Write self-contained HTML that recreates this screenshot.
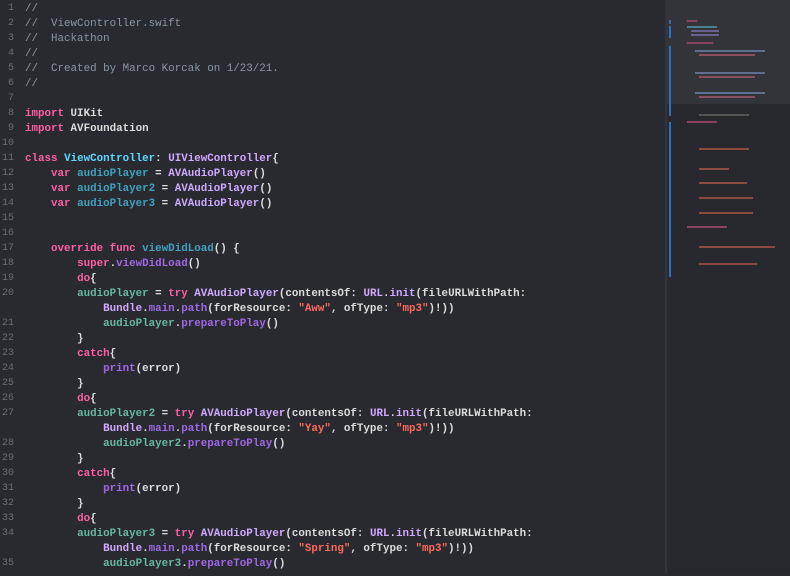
<!DOCTYPE html>
<html><head><meta charset="utf-8"><style>
body{margin:0;width:790px;height:573px;background:#292a2f;overflow:hidden;position:relative;font-family:"Liberation Mono",monospace;font-size:10.85px;}
.ln{position:absolute;left:0;width:14px;text-align:right;color:#6c6d72;font-size:10px;}
.c{position:absolute;left:25px;white-space:pre;color:#dcdcde;font-weight:bold;}
.cm{color:#8a96a2;font-weight:normal}
.k{color:#fc5fa3}
.t{color:#5dd8ff}
.d{color:#41a1c0;}
.p{color:#d0a8ff}
.v{color:#67b7a4}
.f{color:#a167e6}
.s{color:#fc6a5d}
#wrap{position:absolute;left:0;top:3px;width:665px;height:573px;}
#mm{position:absolute;left:665px;top:0;width:125px;height:573px;background:#28292e;border-left:2px solid #333439;}
#vp{position:absolute;left:0;top:0;width:123px;height:104px;background:#333439;}
.b{position:absolute;height:2px;}
.ch{position:absolute;left:2px;width:2px;background:#2f6fc0;}
</style></head><body>
<div id="wrap">
<div class="ln" style="top:0">1</div><div class="c" style="top:0"><span class="cm">//</span></div>
<div class="ln" style="top:15px">2</div><div class="c" style="top:15px"><span class="cm">//  ViewController.swift</span></div>
<div class="ln" style="top:30px">3</div><div class="c" style="top:30px"><span class="cm">//  Hackathon</span></div>
<div class="ln" style="top:45px">4</div><div class="c" style="top:45px"><span class="cm">//</span></div>
<div class="ln" style="top:60px">5</div><div class="c" style="top:60px"><span class="cm">//  Created by Marco Korcak on 1/23/21.</span></div>
<div class="ln" style="top:75px">6</div><div class="c" style="top:75px"><span class="cm">//</span></div>
<div class="ln" style="top:90px">7</div>
<div class="ln" style="top:105px">8</div><div class="c" style="top:105px"><span class="k">import</span> UIKit</div>
<div class="ln" style="top:120px">9</div><div class="c" style="top:120px"><span class="k">import</span> AVFoundation</div>
<div class="ln" style="top:135px">10</div>
<div class="ln" style="top:150px">11</div><div class="c" style="top:150px"><span class="k">class</span> <span class="t">ViewController</span>: <span class="p">UIViewController</span>{</div>
<div class="ln" style="top:165px">12</div><div class="c" style="top:165px">    <span class="k">var</span> <span class="d">audioPlayer</span> = <span class="p">AVAudioPlayer</span>()</div>
<div class="ln" style="top:180px">13</div><div class="c" style="top:180px">    <span class="k">var</span> <span class="d">audioPlayer2</span> = <span class="p">AVAudioPlayer</span>()</div>
<div class="ln" style="top:195px">14</div><div class="c" style="top:195px">    <span class="k">var</span> <span class="d">audioPlayer3</span> = <span class="p">AVAudioPlayer</span>()</div>
<div class="ln" style="top:210px">15</div>
<div class="ln" style="top:225px">16</div>
<div class="ln" style="top:240px">17</div><div class="c" style="top:240px">    <span class="k">override func</span> <span class="d">viewDidLoad</span>() {</div>
<div class="ln" style="top:255px">18</div><div class="c" style="top:255px">        <span class="k">super</span>.<span class="f">viewDidLoad</span>()</div>
<div class="ln" style="top:270px">19</div><div class="c" style="top:270px">        <span class="k">do</span>{</div>
<div class="ln" style="top:285px">20</div><div class="c" style="top:285px">        <span class="v">audioPlayer</span> = <span class="k">try</span> <span class="p">AVAudioPlayer</span>(contentsOf: <span class="p">URL</span>.<span class="p">init</span>(fileURLWithPath:</div>
<div class="c" style="top:300px">            <span class="p">Bundle</span>.<span class="f">main</span>.<span class="f">path</span>(forResource: <span class="s">"Aww"</span>, ofType: <span class="s">"mp3"</span>)!))</div>
<div class="ln" style="top:315px">21</div><div class="c" style="top:315px">            <span class="v">audioPlayer</span>.<span class="f">prepareToPlay</span>()</div>
<div class="ln" style="top:330px">22</div><div class="c" style="top:330px">        }</div>
<div class="ln" style="top:345px">23</div><div class="c" style="top:345px">        <span class="k">catch</span>{</div>
<div class="ln" style="top:360px">24</div><div class="c" style="top:360px">            <span class="f">print</span>(error)</div>
<div class="ln" style="top:375px">25</div><div class="c" style="top:375px">        }</div>
<div class="ln" style="top:390px">26</div><div class="c" style="top:390px">        <span class="k">do</span>{</div>
<div class="ln" style="top:405px">27</div><div class="c" style="top:405px">        <span class="v">audioPlayer2</span> = <span class="k">try</span> <span class="p">AVAudioPlayer</span>(contentsOf: <span class="p">URL</span>.<span class="p">init</span>(fileURLWithPath:</div>
<div class="c" style="top:420px">            <span class="p">Bundle</span>.<span class="f">main</span>.<span class="f">path</span>(forResource: <span class="s">"Yay"</span>, ofType: <span class="s">"mp3"</span>)!))</div>
<div class="ln" style="top:435px">28</div><div class="c" style="top:435px">            <span class="v">audioPlayer2</span>.<span class="f">prepareToPlay</span>()</div>
<div class="ln" style="top:450px">29</div><div class="c" style="top:450px">        }</div>
<div class="ln" style="top:465px">30</div><div class="c" style="top:465px">        <span class="k">catch</span>{</div>
<div class="ln" style="top:480px">31</div><div class="c" style="top:480px">            <span class="f">print</span>(error)</div>
<div class="ln" style="top:495px">32</div><div class="c" style="top:495px">        }</div>
<div class="ln" style="top:510px">33</div><div class="c" style="top:510px">        <span class="k">do</span>{</div>
<div class="ln" style="top:525px">34</div><div class="c" style="top:525px">        <span class="v">audioPlayer3</span> = <span class="k">try</span> <span class="p">AVAudioPlayer</span>(contentsOf: <span class="p">URL</span>.<span class="p">init</span>(fileURLWithPath:</div>
<div class="c" style="top:540px">            <span class="p">Bundle</span>.<span class="f">main</span>.<span class="f">path</span>(forResource: <span class="s">"Spring"</span>, ofType: <span class="s">"mp3"</span>)!))</div>
<div class="ln" style="top:555px">35</div><div class="c" style="top:555px">            <span class="v">audioPlayer3</span>.<span class="f">prepareToPlay</span>()</div>
</div>
<div id="mm"><div id="vp"></div>
<div class="ch" style="top:20px;height:4px"></div>
<div class="ch" style="top:26px;height:12px"></div>
<div class="ch" style="top:46px;height:70px"></div>
<div class="ch" style="top:122px;height:155px"></div>
<div class="b" style="left:20px;top:20px;width:10px;background:#8a4060"></div>
<div class="b" style="left:20px;top:26px;width:30px;background:#4a7f8f"></div>
<div class="b" style="left:24px;top:30px;width:28px;background:#6a5f8f"></div>
<div class="b" style="left:24px;top:34px;width:28px;background:#6a5f8f"></div>
<div class="b" style="left:20px;top:42px;width:26px;background:#8a4060"></div>
<div class="b" style="left:28px;top:50px;width:70px;background:#5f6f8f"></div>
<div class="b" style="left:32px;top:54px;width:56px;background:#8a5060"></div>
<div class="b" style="left:28px;top:72px;width:70px;background:#5f6f8f"></div>
<div class="b" style="left:32px;top:76px;width:56px;background:#8a5060"></div>
<div class="b" style="left:28px;top:92px;width:70px;background:#5f6f8f"></div>
<div class="b" style="left:32px;top:96px;width:56px;background:#8a5060"></div>
<div class="b" style="left:32px;top:114px;width:50px;background:#555"></div>
<div class="b" style="left:20px;top:121px;width:30px;background:#8a4060"></div>
<div class="b" style="left:32px;top:148px;width:50px;background:#8a4a40"></div>
<div class="b" style="left:32px;top:168px;width:30px;background:#8a4a40"></div>
<div class="b" style="left:32px;top:182px;width:48px;background:#8a4a40"></div>
<div class="b" style="left:32px;top:197px;width:54px;background:#8a4a40"></div>
<div class="b" style="left:32px;top:212px;width:54px;background:#8a4a40"></div>
<div class="b" style="left:20px;top:226px;width:40px;background:#8a4060"></div>
<div class="b" style="left:32px;top:246px;width:76px;background:#8a4a40"></div>
<div class="b" style="left:32px;top:263px;width:58px;background:#8a4a40"></div>
</div>
</body></html>
